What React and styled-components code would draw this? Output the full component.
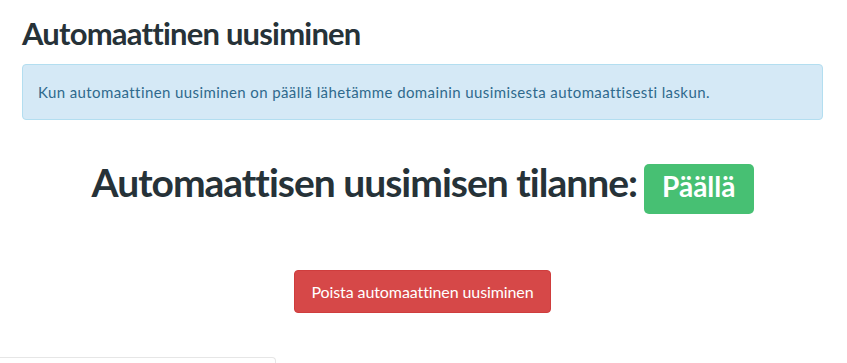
import styled, { createGlobalStyle } from 'styled-components';

const GlobalStyle = createGlobalStyle`
  body {
    margin: 0;
    background: #fff;
    font-family: Lato, "Open Sans", sans-serif;
    color: #263238;
  }
`;

const Page = styled.div`
  width: 847px;
  height: 363px;
  overflow: hidden;
`;

const Content = styled.div`
  padding: 15px 24px 0 22px;
`;

const Title = styled.h1`
  margin: 0 0 13px;
  font-size: 31px;
  line-height: 36px;
  font-weight: 700;
  letter-spacing: -0.8px;
  color: #263238;
`;

const Alert = styled.div`
  box-sizing: border-box;
  height: 56px;
  padding: 0 15px;
  display: flex;
  align-items: center;
  background: #d5e9f6;
  border: 1px solid #b3def0;
  border-radius: 4px;
  color: #2f6a8d;
  font-size: 15px;
  letter-spacing: 0.4px;
`;

const StatusRow = styled.div`
  margin-top: 43px;
  display: flex;
  justify-content: center;
  align-items: baseline;
  gap: 7px;
`;

const StatusText = styled.h2`
  margin: 0;
  font-size: 39px;
  line-height: 39px;
  font-weight: 700;
  letter-spacing: -1px;
  color: #263238;
`;

const Badge = styled.span`
  display: inline-block;
  height: 50px;
  padding: 0 18px;
  line-height: 44px;
  border-radius: 5px;
  background: ${(p) => p.$color};
  color: #fff;
  font-size: 28px;
  font-weight: 700;
`;

const Actions = styled.div`
  margin-top: 56px;
  display: flex;
  justify-content: center;
`;

const DangerButton = styled.button`
  box-sizing: border-box;
  height: 43px;
  padding: 0 16px;
  border: 1px solid #cf3d3d;
  border-radius: 4px;
  background: #d64848;
  color: #fff;
  font-family: inherit;
  font-size: 16px;
  letter-spacing: -0.1px;
  cursor: pointer;
`;

const NextCard = styled.div`
  margin-top: 44px;
  width: 275px;
  height: 20px;
  border-top: 1px solid #e6e6e6;
  border-right: 1px solid #e6e6e6;
  border-top-right-radius: 4px;
`;

const App = () => {
  return (
    <Page>
      <GlobalStyle />
      <Content>
        <Title>Automaattinen uusiminen</Title>
        <Alert>
          Kun automaattinen uusiminen on päällä lähetämme domainin uusimisesta automaattisesti laskun.
        </Alert>
        <StatusRow>
          <StatusText>Automaattisen uusimisen tilanne:</StatusText>
          <Badge $color='#47c073'>Päällä</Badge>
        </StatusRow>
        <Actions>
          <DangerButton>Poista automaattinen uusiminen</DangerButton>
        </Actions>
      </Content>
      <NextCard />
    </Page>
  );
};

export default App;
